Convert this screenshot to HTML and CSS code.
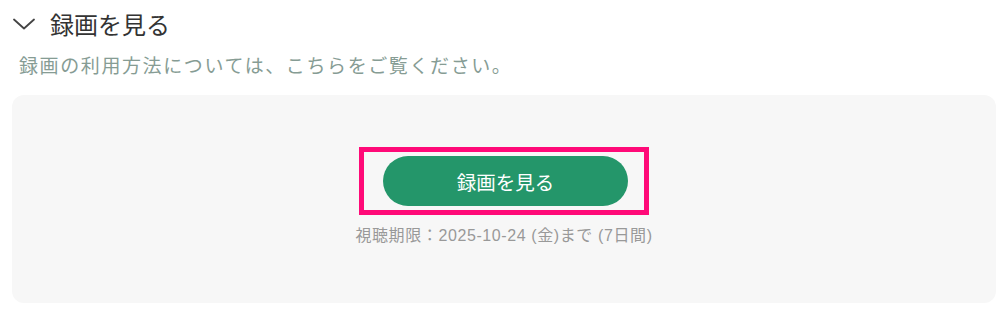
FILE: index.html
```html
<!DOCTYPE html>
<html lang="ja">
<head>
  <meta charset="UTF-8">
  <meta name="viewport" content="width=device-width, initial-scale=1.0">
  <title>録画を見る</title>
  <link rel="stylesheet" href="styles.css">
</head>
<body>
  <section class="recording">
    <div class="recording-head">
      <svg class="chevron" width="22" height="12" viewBox="0 0 22 12">
        <path d="M1 1.5 L11 10.5 L21 1.5" fill="none" stroke="#444" stroke-width="1.8" stroke-linecap="round" stroke-linejoin="round"/>
      </svg>
      <h2>録画を見る</h2>
    </div>
    <p class="recording-note">録画の利用方法については、こちらをご覧ください。</p>

    <div class="recording-box">
      <div class="highlight">
        <button type="button">録画を見る</button>
      </div>
      <p class="deadline">視聴期限：2025-10-24 (金)まで (7日間)</p>
    </div>
  </section>
</body>
</html>
```

FILE: styles.css
```css
* {
  margin: 0;
  padding: 0;
  box-sizing: border-box;
}

body {
  background: #fff;
  font-family: 'Liberation Sans', 'Noto Sans CJK JP', sans-serif;
}

.recording-head {
  display: flex;
  align-items: center;
  height: 46px;
  padding-left: 13px;
}

.chevron {
  margin-right: 15px;
  margin-top: 1px;
}

.recording-head h2 {
  font-size: 24px;
  font-weight: 400;
  color: #333;
}

.recording-note {
  margin: 9px 0 0 19px;
  font-size: 19px;
  line-height: 24px;
  letter-spacing: 1.6px;
  color: #869c94;
}

.recording-box {
  margin: 16px 10px 0 12px;
  height: 208px;
  background: #f7f7f7;
  border-radius: 12px;
  display: flex;
  flex-direction: column;
  align-items: center;
  padding-top: 52px;
}

.highlight {
  width: 290px;
  height: 68px;
  border: 5px solid #ff0a78;
  display: flex;
  align-items: center;
  justify-content: center;
  padding-left: 3px;
}

.highlight button {
  width: 245px;
  height: 50px;
  border: none;
  border-radius: 25px;
  background: #24966a;
  color: #fff;
  font-family: inherit;
  font-size: 19.5px;
  cursor: pointer;
}

.deadline {
  margin-top: 10px;
  font-size: 16px;
  line-height: 21px;
  letter-spacing: 0.6px;
  color: #999;
}
```
